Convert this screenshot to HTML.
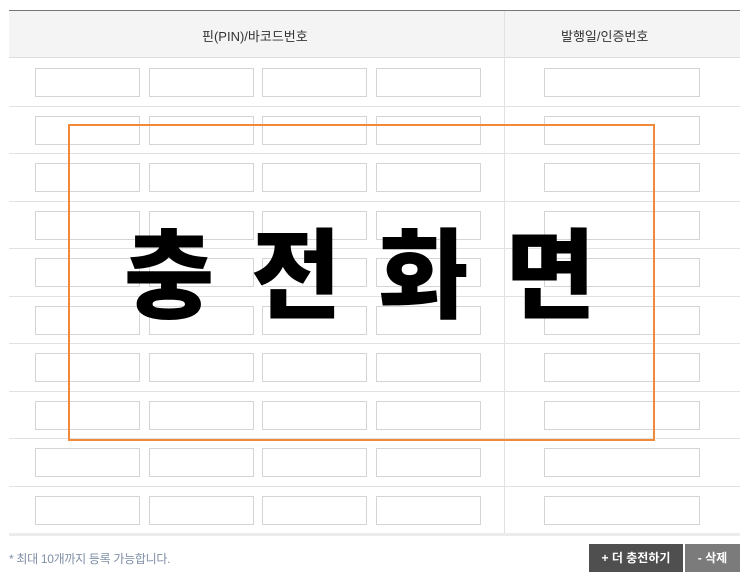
<!DOCTYPE html>
<html><head><meta charset="utf-8"><style>
*{margin:0;padding:0;box-sizing:border-box}
body{width:743px;height:583px;background:#fff;position:relative;overflow:hidden;font-family:"Liberation Sans","Noto Sans CJK KR",sans-serif}
.top{position:absolute;left:9px;width:731px;top:10px;height:1px;background:#777}
.hdr{position:absolute;left:9px;width:731px;top:11px;height:47px;background:#f4f4f4;border-bottom:1px solid #ddd}
.hdr span{position:absolute;top:15px;font-size:13px;color:#333}
.vd{position:absolute;left:504px;top:11px;width:1px;height:522px;background:#e2e2e2}
.row{position:absolute;left:9px;width:731px;height:1px;background:#e2e2e2}
.in{position:absolute;height:29px;border:1px solid #d4d4d4;background:#fff}
.note{position:absolute;left:9px;top:550px;font-size:12px;color:#7f8fa6;letter-spacing:-0.3px}
.b1{position:absolute;left:589px;top:544px;width:94px;height:28px;background:#4f4f4f;color:#fff;font-size:12px;font-weight:bold;text-align:center;line-height:28px}
.b2{position:absolute;left:685px;top:544px;width:55px;height:28px;background:#7b7b7b;color:#fff;font-size:12px;font-weight:bold;text-align:center;line-height:28px}
.box{position:absolute;left:68px;top:124px;width:587px;height:317px;border:2px solid #f08a3a}
.big{position:absolute;left:124px;top:198px;font-family:"Noto Sans CJK KR",sans-serif;font-weight:900;font-size:98px;letter-spacing:37px;line-height:140px;color:#000;white-space:nowrap}
</style></head><body>
<div class="top"></div>
<div class="hdr"><span style="left:193px">핀(PIN)/바코드번호</span><span style="left:552px">발행일/인증번호</span></div>
<div class="vd"></div>
<div id="g"></div>
<div class="note">* 최대 10개까지 등록 가능합니다.</div>
<div class="b1">+ 더 충전하기</div>
<div class="b2">- 삭제</div>
<div class="box"></div>
<div class="big">충전화면</div>
<script>
var g=document.getElementById('g'),h='';
for(var i=0;i<10;i++){var y=58+i*47.5;
if(i>0)h+='<div class="row" style="top:'+Math.round(y)+'px"></div>';
var iy=Math.round(y+10);
[[35,105],[149,105],[262,105],[376,105],[544,156]].forEach(function(a){h+='<div class="in" style="left:'+a[0]+'px;top:'+iy+'px;width:'+a[1]+'px"></div>'});}
h+='<div class="row" style="top:533px;height:3px;background:#ececec"></div>';
g.innerHTML=h;
</script>
</body></html>
